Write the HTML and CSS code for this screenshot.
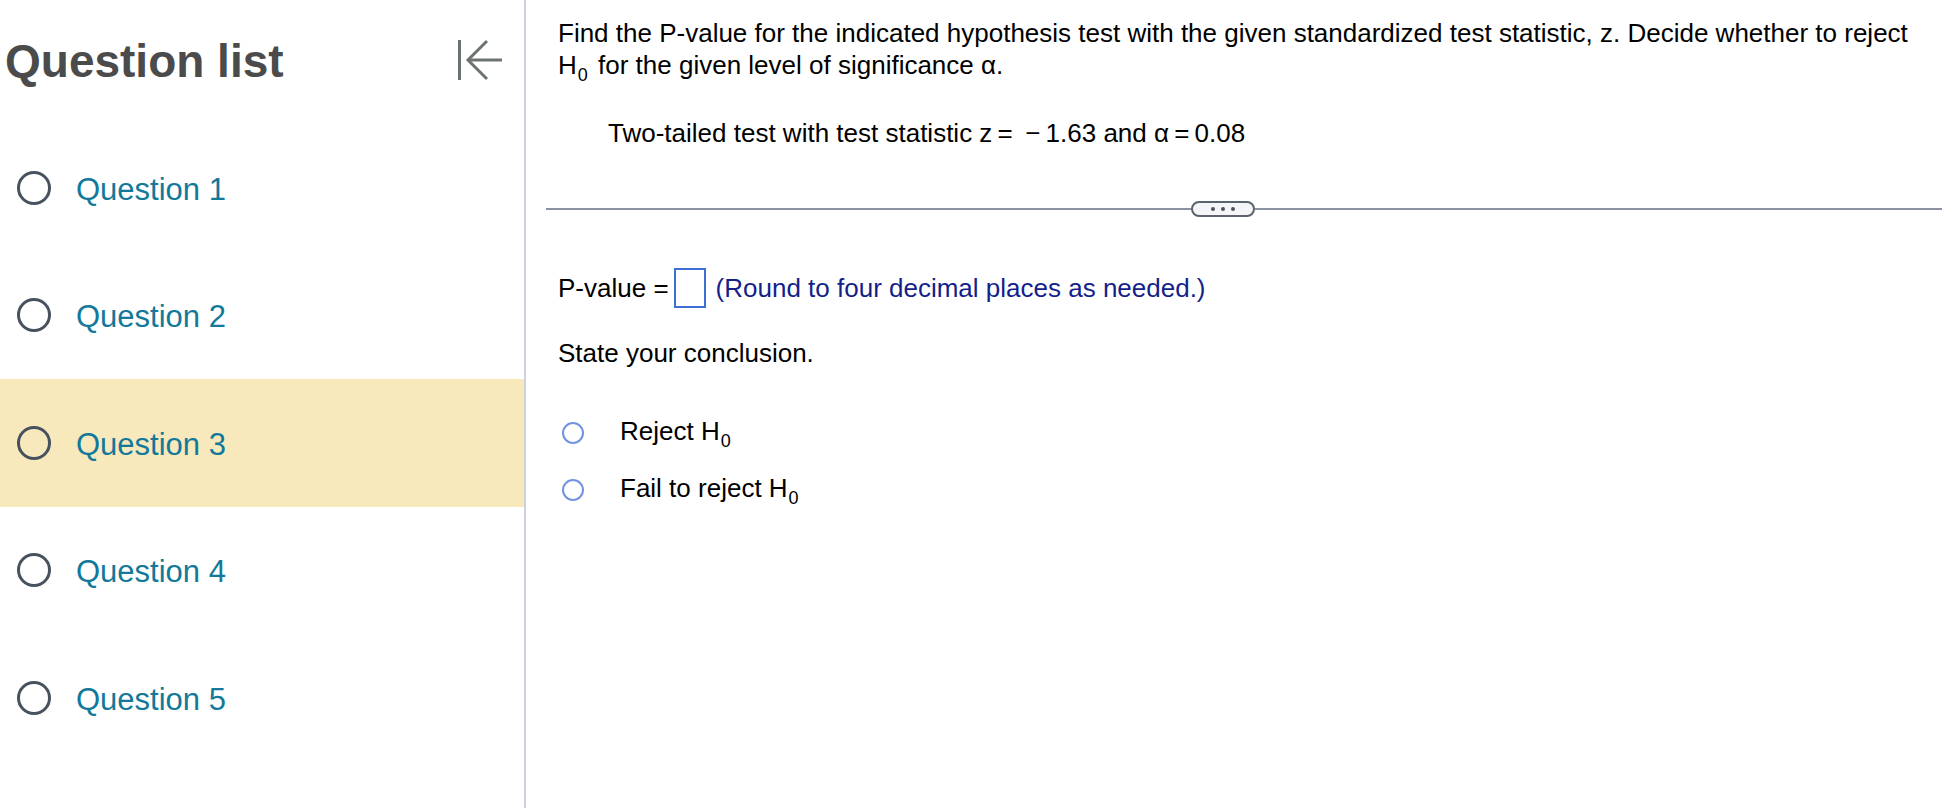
FILE: index.html
```html
<!DOCTYPE html>
<html lang="en">
<head>
<meta charset="utf-8">
<title>Question list</title>
<link rel="stylesheet" href="styles.css">
</head>
<body>
<div class="app">
  <aside class="sidebar">
    <div class="sidebar-header">
      <h1 class="sidebar-title">Question list</h1>
      <button class="collapse-btn" aria-label="Collapse question list">
        <svg width="48" height="42" viewBox="0 0 48 42" fill="none" stroke="#6d7272" stroke-width="3" stroke-linecap="butt" stroke-linejoin="miter">
          <path d="M3.5 1V41"/>
          <path d="M12 21H46"/>
          <path d="M31 2L12 21L31 40"/>
        </svg>
      </button>
    </div>
    <ul class="question-list">
      <li class="question-item"><span class="q-radio"></span><span class="q-label">Question 1</span></li>
      <li class="question-item"><span class="q-radio"></span><span class="q-label">Question 2</span></li>
      <li class="question-item is-current"><span class="q-radio"></span><span class="q-label">Question 3</span></li>
      <li class="question-item"><span class="q-radio"></span><span class="q-label">Question 4</span></li>
      <li class="question-item"><span class="q-radio"></span><span class="q-label">Question 5</span></li>
    </ul>
  </aside>
  <main class="content">
    <section class="stem">
      <p class="prompt">Find the P-value for the indicated hypothesis test with the given standardized test statistic, z. Decide whether to reject H<sub>0</sub> for the given level of significance α.</p>
      <p class="given">Two-tailed test with test statistic z&#8201;=&nbsp;&#8201;−&#8201;1.63 and α&#8201;=&#8201;0.08</p>
    </section>
    <div class="divider">
      <span class="divider-line divider-left"></span>
      <span class="more-pill"><i></i><i></i><i></i></span>
      <span class="divider-line divider-right"></span>
    </div>
    <section class="answer">
      <div class="pvalue-row">
        <span>P-value =</span>
        <span class="answer-box"></span>
        <span class="hint">(Round to four decimal places as needed.)</span>
      </div>
      <p class="conclusion">State your conclusion.</p>
      <ul class="choices">
        <li class="choice"><span class="choice-radio"></span><span>Reject H<sub>0</sub></span></li>
        <li class="choice"><span class="choice-radio"></span><span>Fail to reject H<sub>0</sub></span></li>
      </ul>
    </section>
  </main>
</div>
</body>
</html>
```
FILE: styles.css
```css
* {
  box-sizing: border-box;
}

html, body {
  margin: 0;
  padding: 0;
  background: #ffffff;
}

body {
  font-family: "Liberation Sans", Arial, Helvetica, sans-serif;
  color: #000000;
}

.app {
  display: flex;
  height: 808px;
  overflow: hidden;
}

/* Sidebar */
.sidebar {
  flex: none;
  width: 526px;
  border-right: 2px solid #cbd0df;
  display: flex;
  flex-direction: column;
}

.sidebar-header {
  height: 124px;
  display: flex;
  justify-content: space-between;
  align-items: flex-start;
  padding: 33px 20px 0 5px;
}

.sidebar-title {
  margin: 0;
  font-size: 46px;
  line-height: 56px;
  font-weight: 700;
  color: #4b4b4b;
}

.collapse-btn {
  margin-top: 6px;
  padding: 0;
  border: 0;
  background: none;
  display: flex;
}

.question-list {
  list-style: none;
  margin: 0;
  padding: 0;
}

.question-item {
  height: 127.5px;
  display: flex;
  align-items: center;
  padding-left: 17px;
}

.question-item.is-current {
  background: #f8e9bd;
}

.q-radio {
  width: 34px;
  height: 34px;
  border: 3px solid #47525e;
  border-radius: 50%;
  flex: none;
}

.q-label {
  margin-left: 25px;
  margin-top: 4px;
  font-size: 31px;
  line-height: 40px;
  color: #13799a;
}

/* Content */
.content {
  flex: 1;
  min-width: 0;
}

.stem {
  padding: 17px 22px 0 32px;
}

.prompt,
.given,
.conclusion {
  margin: 0;
  font-size: 26px;
  line-height: 32px;
}

sub {
  font-size: 18px;
  line-height: 0;
  vertical-align: -7px;
  margin: 0 3px 0 1px;
}

.given {
  margin-top: 36px;
  margin-left: 50px;
}

.divider {
  display: flex;
  align-items: center;
  height: 16px;
  margin: 52px 0 0 20px;
}

.divider-line {
  height: 2px;
  background: #8a92a1;
}

.divider-left {
  flex: none;
  width: 645px;
}

.divider-right {
  flex: 1;
}

.more-pill {
  flex: none;
  width: 64px;
  height: 16px;
  border: 2px solid #5b636e;
  border-radius: 8px;
  background: #f3f5f8;
  display: flex;
  justify-content: center;
  align-items: center;
  gap: 6px;
}

.more-pill i {
  width: 4px;
  height: 4px;
  border-radius: 50%;
  background: #4d545e;
}

.answer {
  padding: 0 22px 0 32px;
  font-size: 26px;
  line-height: 32px;
}

.pvalue-row {
  display: flex;
  align-items: center;
  height: 40px;
  margin-top: 51px;
  white-space: pre;
}

.answer-box {
  width: 32px;
  height: 40px;
  border: 2px solid #3c6fd4;
  margin: 0 10px 0 5px;
  flex: none;
}

.hint {
  color: #141f8a;
}

.conclusion {
  margin-top: 29px;
}

.choices {
  list-style: none;
  margin: 46px 0 0 0;
  padding: 0;
}

.choice {
  display: flex;
  align-items: center;
  height: 32px;
}

.choice + .choice {
  margin-top: 25px;
}

.choice-radio {
  flex: none;
  width: 22px;
  height: 22px;
  border: 2px solid #7393e0;
  border-radius: 50%;
  margin: 3px 36px 0 4px;
}
```
